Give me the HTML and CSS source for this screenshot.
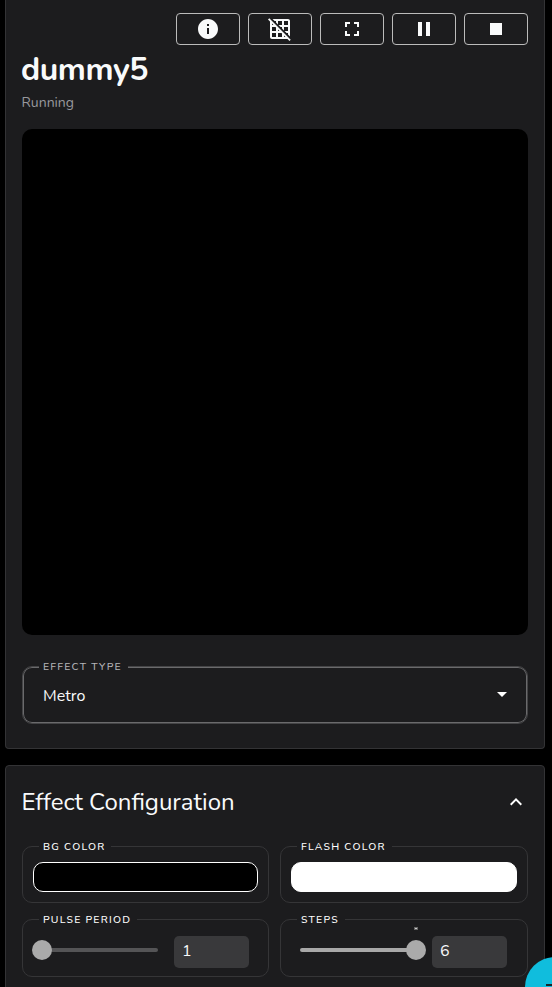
FILE: index.html
```html
<!DOCTYPE html>
<html lang="en">
<head>
<meta charset="utf-8">
<title>dummy5</title>
<link rel="stylesheet" href="styles.css">
</head>
<body>
<main class="page">
  <section class="card card-main">
    <div class="toolbar">
      <button class="tool" aria-label="Info"><svg viewBox="0 0 24 24"><path d="M12 2C6.48 2 2 6.48 2 12s4.48 10 10 10 10-4.48 10-10S17.52 2 12 2zm1 15h-2v-6h2v6zm0-8h-2V7h2v2z"/></svg></button>
      <button class="tool" aria-label="Grid off"><svg viewBox="0 0 24 24"><path d="M8 4v1.45l2 2V4h4v4h-3.45l2 2H14v1.45l2 2V10h4v4h-3.45l2 2H20v1.45l2 2V4c0-1.1-.9-2-2-2H4.55l2 2H8zm8 0h4v4h-4V4zM1.27 1.27L0 2.55l2 2V20c0 1.1.9 2 2 2h15.46l2 2 1.27-1.27L1.27 1.27zM10 12.55L11.45 14H10v-1.45zm-6-6L5.45 8H4V6.55zM8 20H4v-4h4v4zm0-6H4v-4h3.45l.55.55V14zm6 6h-4v-4h3.45l.55.54V20zm2 0v-1.46L17.46 20H16z"/></svg></button>
      <button class="tool" aria-label="Fullscreen"><svg viewBox="0 0 24 24"><path d="M7 14H5v5h5v-2H7v-3zm-2-4h2V7h3V5H5v5zm12 7h-3v2h5v-5h-2v3zM14 5v2h3v3h2V5h-5z"/></svg></button>
      <button class="tool" aria-label="Pause"><svg viewBox="0 0 24 24"><path d="M6 19h4V5H6v14zm8-14v14h4V5h-4z"/></svg></button>
      <button class="tool" aria-label="Stop"><svg viewBox="0 0 24 24"><path d="M6 6h12v12H6z"/></svg></button>
    </div>
    <h1 class="title">dummy5</h1>
    <p class="status">Running</p>
    <div class="preview"></div>
    <div class="select">
      <span class="label label-type">Effect Type</span>
      <span class="select-value">Metro</span>
      <svg class="caret" viewBox="0 0 24 24"><path d="M7 10l5 5 5-5z"/></svg>
    </div>
  </section>
  <section class="card card-config">
    <header class="config-head">
      <h2 class="heading">Effect Configuration</h2>
      <svg class="chevron" viewBox="0 0 24 24"><path d="M12 8l-6 6 1.41 1.41L12 10.83l4.59 4.58L18 14z"/></svg>
    </header>
    <div class="grid">
      <div class="field color"><span class="label label-bg">BG Color</span><div class="swatch swatch-black"></div></div>
      <div class="field color"><span class="label label-flash">Flash Color</span><div class="swatch swatch-white"></div></div>
      <div class="field range"><span class="label label-pulse">Pulse Period</span>
        <div class="track"><i class="thumb"></i></div><div class="number">1</div></div>
      <div class="field range"><span class="label label-steps">Steps</span>
        <div class="track full"><i class="thumb"></i><i class="mark"></i></div><div class="number">6</div></div>
    </div>
  </section>
  <button class="fab" aria-label="Menu"><i class="fab-bar"></i></button>
</main>
</body>
</html>
```
FILE: styles.css
```css
* { box-sizing: border-box; }
html, body { margin: 0; height: 100%; overflow: hidden; background: #000; }
body { font-family: Nunito, Lato, "Open Sans", sans-serif; color: #f9fafb; }
.page { position: relative; height: 987px; padding: 0 7px 0 5px; overflow: hidden; display: flex; flex-direction: column; gap: 16px; }
.card { flex: none; background: #1c1c1e; border: 1px solid #333335; padding: 0 16px; }
.card-main { height: 749px; border-top: 0; border-radius: 0 0 4px 4px; }
.card-config { height: 240px; border-radius: 4px; }
.toolbar { display: flex; justify-content: flex-end; gap: 8px; padding-top: 13px; }
.tool { width: 64px; height: 32px; padding: 0; display: flex; align-items: center; justify-content: center; background: none; border: 1px solid #bbb; border-radius: 4px; }
.tool svg { width: 24px; height: 24px; fill: #f9fafb; }
.title { margin: 0; height: 47px; padding-top: 1px; font-size: 32px; line-height: 47px; font-weight: 700; letter-spacing: -.45px; text-indent: -1px; }
.status { margin: 0; height: 37px; padding-top: 1px; font-size: 14px; line-height: 20px; color: #98989d; text-indent: -.5px; }
.preview { height: 506px; border-radius: 10px; background: #000; }
.select { position: relative; display: flex; align-items: center; justify-content: space-between; height: 58px; margin-top: 31px; padding: 0 13px 0 19px; border: 1px solid #444446; border-radius: 10px; box-shadow: inset 0 0 0 1px #6a6a6c; }
.select-value { font-size: 16px; padding: 2px 0 0 1px; }
.caret { width: 24px; height: 24px; fill: #fff; margin-top: -3px; }
.label { position: absolute; top: -7px; left: 16px; height: 14px; padding: 0 4px; background: #1c1c1e; font-size: 10.4px; line-height: 14px; letter-spacing: 1.25px; text-transform: uppercase; white-space: nowrap; font-weight: 500; color: #fff; }
.label-type { color: #b4b4b8; width: 89px; }
.label-bg { width: 72px; }
.label-flash { width: 95px; }
.label-pulse { width: 98px; }
.label-steps { width: 48px; }
.config-head { display: flex; align-items: center; justify-content: space-between; height: 72px; }
.heading { margin: 0; font-size: 24px; line-height: 32px; font-weight: 400; text-indent: -.5px; }
.chevron { width: 24px; height: 24px; fill: #fff; }
.grid { display: grid; grid-template-columns: 247px 248px; column-gap: 11px; row-gap: 16px; padding-top: 8px; }
.field { position: relative; border: 1px solid #353537; border-radius: 10px; }
.color { height: 57px; padding: 15px 10px 0; }
.swatch { height: 30px; border: 1px solid #fff; border-radius: 10px; }
.swatch-black { background: #000; }
.swatch-white { background: #fff; }
.range { height: 58px; display: flex; align-items: center; padding: 4px 19px 0; }
.track { position: relative; width: 116px; height: 4px; border-radius: 2px; background: #545456; }
.full { background: #a8a8a8; }
.thumb { position: absolute; top: -8px; left: -10px; width: 20px; height: 20px; border-radius: 50%; background: #aaa; }
.full .thumb { left: 106px; }
.mark { position: absolute; top: -21px; left: 114px; width: 4px; height: 3px; background: #ccc; border: 1px solid #666; }
.number { flex: none; width: 75px; height: 32px; margin: 4px 0 0 16px; padding-left: 8px; border-radius: 5px; background: #39393b; font-size: 16px; line-height: 30px; }
.fab { position: absolute; left: 525px; top: 957px; width: 60px; height: 60px; padding: 0; border: 0; border-radius: 50%; background: #10bddd; }
.fab-bar { position: absolute; left: 21px; top: 27px; width: 18px; height: 2px; background: #17252a; }
```
